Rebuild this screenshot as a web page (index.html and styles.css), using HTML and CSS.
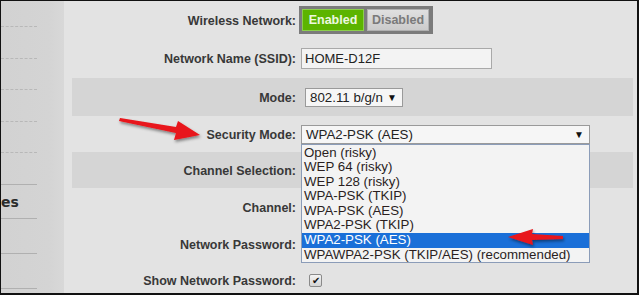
FILE: index.html
```html
<!DOCTYPE html>
<html lang="en">
<head>
    <meta charset="UTF-8">
    <title>Wireless Settings</title>
    <link rel="stylesheet" href="styles.css">
</head>
<body>
    <div id="frame">
        <div class="sidebar">
            <div class="nav-item dashed h25"></div>
            <div class="nav-item dashed h31"></div>
            <div class="nav-item dashed h30"></div>
            <div class="nav-item dashed h31"></div>
            <div class="nav-item dashed h30"></div>
            <div class="nav-item h31"></div>
            <div class="nav-item h33"><span class="nav-text">es</span></div>
            <div class="nav-item h34"></div>
            <div class="nav-item h34"></div>
        </div>

        <div class="main">
            <div class="row r1">
                <label>Wireless Network:</label>
                <div class="toggle">
                    <span class="btn on">Enabled</span>
                    <span class="btn off">Disabled</span>
                </div>
            </div>
            <div class="row r2">
                <label>Network Name (SSID):</label>
                <div class="input">HOME-D12F</div>
            </div>
            <div class="row r3 band">
                <label>Mode:</label>
                <div class="select mode">802.11 b/g/n <span class="caret">&#9660;</span></div>
            </div>
            <div class="row r4">
                <label>Security Mode:</label>
                <div class="select-wrap">
                    <div class="select security">WPA2-PSK (AES) <span class="caret">&#9660;</span></div>
                    <ul class="dropdown">
                        <li>Open (risky)</li>
                        <li>WEP 64 (risky)</li>
                        <li>WEP 128 (risky)</li>
                        <li>WPA-PSK (TKIP)</li>
                        <li>WPA-PSK (AES)</li>
                        <li>WPA2-PSK (TKIP)</li>
                        <li class="selected">WPA2-PSK (AES)</li>
                        <li>WPAWPA2-PSK (TKIP/AES) (recommended)</li>
                    </ul>
                </div>
            </div>
            <div class="row r5 band">
                <label>Channel Selection:</label>
            </div>
            <div class="row r6">
                <label>Channel:</label>
            </div>
            <div class="row r7">
                <label>Network Password:</label>
            </div>
            <div class="row r8">
                <label>Show Network Password:</label>
                <span class="checkbox">&#10004;</span>
            </div>
        </div>

        <svg class="arrows" width="639" height="295" viewBox="0 0 639 295">
            <defs>
                <filter id="shadow" x="-20%" y="-50%" width="140%" height="200%">
                    <feDropShadow dx="1" dy="2" stdDeviation="1.5" flood-color="#000" flood-opacity="0.45"/>
                </filter>
            </defs>
            <g fill="#e8141a" filter="url(#shadow)">
                <polygon points="120,118 176,127 178,121 200,135 174,140 176,133 119,121"/>
                <polygon points="563,236 532,234 533,229 508,237 533,245 532,240 563,239"/>
            </g>
        </svg>
    </div>
</body>
</html>
```

FILE: styles.css
```css
body {
    margin: 0;
    background: #111;
}
#frame {
    position: relative;
    width: 636px;
    height: 292px;
    border-top: 1px solid #111;
    border-left: 1px solid #111;
    border-right: 2px solid #111;
    border-bottom: 2px solid #111;
    display: flex;
    overflow: hidden;
    background: #e3e3e3;
    font-family: "Liberation Sans", Arial, sans-serif;
}
.sidebar {
    width: 63px;
    flex: none;
    background: linear-gradient(to right, #d2d2d2 0, #d4d4d4 48px, #d8d8d8 63px);
}
.nav-item {
    width: 36px;
    border-bottom: 1px solid #b0b0b0;
    display: flex;
    align-items: center;
}
.nav-item.dashed {
    border-bottom: 1px dashed #b8b8b8;
}
.h25 { height: 25px; }
.h30 { height: 30px; }
.h31 { height: 31px; }
.h33 { height: 33px; }
.h34 { height: 34px; }
.nav-text {
    font-family: "DejaVu Sans", Verdana, sans-serif;
    font-weight: bold;
    font-size: 14px;
    color: #2c2c2c;
    margin-top: 1px;
}
.main {
    flex: 1;
    padding: 0 4px 0 8px;
}
.row {
    display: grid;
    grid-template-columns: 224px 1fr;
    column-gap: 5px;
    align-items: center;
}
.row.band {
    background: #d5d5d5;
}
.r1 { height: 38px; }
.r2 { height: 39px; }
.r3 { height: 38px; }
.r4 { height: 36px; }
.r5 { height: 36px; }
.r6 { height: 38px; }
.r7 { height: 36px; }
.r8 { height: 36px; }
label {
    text-align: right;
    font-weight: bold;
    font-size: 12.5px;
    color: #383838;
    padding-top: 1px;
}
.toggle {
    display: flex;
    gap: 3px;
    width: 128px;
    padding: 3px;
    margin-left: -2px;
    background: #7b7b7b;
}
.btn {
    width: 60px;
    height: 20px;
    line-height: 20px;
    text-align: center;
    font-weight: bold;
    font-size: 12.5px;
}
.btn.on {
    background: #5cb400;
    border: 1px solid #8ccf4c;
    color: #eef8e0;
}
.btn.off {
    background: linear-gradient(#e0e0e0, #cbcbcb);
    border: 1px solid #b0b0b0;
    color: #7a7a7a;
}
.input {
    width: 186px;
    height: 19px;
    line-height: 19px;
    padding-left: 3px;
    border: 1px solid #a9a9a9;
    background: #f3f3f3;
    font-size: 13px;
    color: #222;
}
.select {
    height: 17px;
    line-height: 17px;
    border: 1px solid #9a9a9a;
    background: #f6f6f6;
    font-size: 13.3px;
    color: #222;
    display: flex;
    justify-content: space-between;
    padding: 0 5px 0 4px;
}
.select.mode {
    width: 87px;
    margin-left: 4px;
}
.select.security {
    width: 278px;
}
.caret {
    font-size: 10px;
    color: #111;
}
.select-wrap {
    position: relative;
}
.dropdown {
    position: absolute;
    top: 19px;
    left: 0;
    width: 287px;
    margin: 0;
    padding: 1px 0 0;
    list-style: none;
    border: 1px solid #8b9cb8;
    background: #f3f3f3;
    z-index: 2;
}
.dropdown li {
    height: 14.6px;
    line-height: 14.6px;
    padding-left: 2px;
    font-size: 13.3px;
    color: #2a1e1e;
}
.dropdown li.selected {
    background: #1a6fd8;
    color: #fff;
}
.checkbox {
    width: 11px;
    height: 11px;
    margin-left: 8px;
    border: 1px solid #8a8a8a;
    border-radius: 2px;
    background: linear-gradient(#f4f4f4, #d4d4d4);
    font-size: 10px;
    line-height: 11px;
    text-align: center;
    color: #111;
}
.arrows {
    position: absolute;
    left: -1px;
    top: -1px;
    z-index: 3;
}
```
